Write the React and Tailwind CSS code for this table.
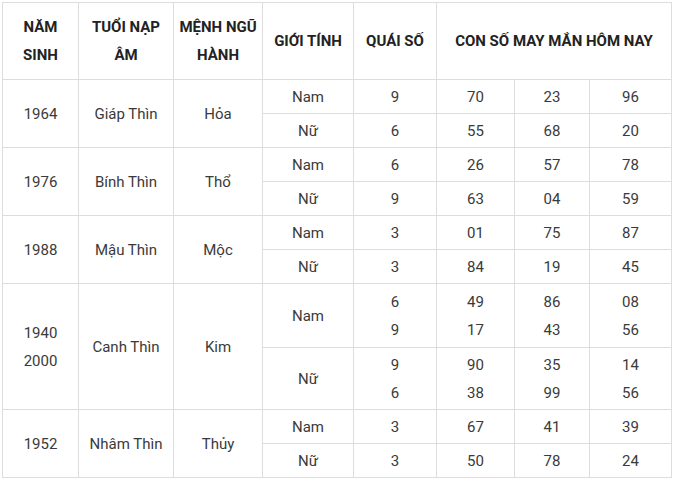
export default function App() {
  const groups = [
    { year: ['1964'], tuoi: 'Giáp Thìn', menh: 'Hỏa', rows: [
      { g: 'Nam', q: ['9'], n: [['70', '23', '96']], h: 'h-[34px]' },
      { g: 'Nữ', q: ['6'], n: [['55', '68', '20']], h: 'h-[34px]' },
    ] },
    { year: ['1976'], tuoi: 'Bính Thìn', menh: 'Thổ', rows: [
      { g: 'Nam', q: ['6'], n: [['26', '57', '78']], h: 'h-[34px]' },
      { g: 'Nữ', q: ['9'], n: [['63', '04', '59']], h: 'h-[34px]' },
    ] },
    { year: ['1988'], tuoi: 'Mậu Thìn', menh: 'Mộc', rows: [
      { g: 'Nam', q: ['3'], n: [['01', '75', '87']], h: 'h-[34px]' },
      { g: 'Nữ', q: ['3'], n: [['84', '19', '45']], h: 'h-[34px]' },
    ] },
    { year: ['1940', '2000'], tuoi: 'Canh Thìn', menh: 'Kim', rows: [
      { g: 'Nam', q: ['6', '9'], n: [['49', '86', '08'], ['17', '43', '56']], h: 'h-[64px]' },
      { g: 'Nữ', q: ['9', '6'], n: [['90', '35', '14'], ['38', '99', '56']], h: 'h-[62px]' },
    ] },
    { year: ['1952'], tuoi: 'Nhâm Thìn', menh: 'Thủy', rows: [
      { g: 'Nam', q: ['3'], n: [['67', '41', '39']], h: 'h-[34px]' },
      { g: 'Nữ', q: ['3'], n: [['50', '78', '24']], h: 'h-[34px]' },
    ] },
  ]

  const td = 'border border-[#dddddd] p-0 text-center align-middle'
  const lines = (arr) => arr.map((v, i) => <div key={i}>{v}</div>)

  return (
    <div className="w-[674px] h-[482px] bg-white pt-[2px] pl-[2px] font-['Roboto',sans-serif] text-[15px] leading-[28px] text-[#3a3a3a]">
      <table className="table-fixed border-collapse w-[669px]">
        <colgroup>
          <col className="w-[76px]" />
          <col className="w-[95px]" />
          <col className="w-[89px]" />
          <col className="w-[91px]" />
          <col className="w-[83px]" />
          <col className="w-[78px]" />
          <col className="w-[75px]" />
          <col className="w-[82px]" />
        </colgroup>
        <thead>
          <tr className="h-[77px] font-bold text-[#222222] uppercase">
            <th className={td}>Năm<br />Sinh</th>
            <th className={td}>Tuổi Nạp<br />Âm</th>
            <th className={td}>Mệnh Ngũ<br />Hành</th>
            <th className={td}>Giới Tính</th>
            <th className={td}>Quái Số</th>
            <th className={td} colSpan={3}>Con Số May Mắn Hôm Nay</th>
          </tr>
        </thead>
        <tbody>
          {groups.map((grp) =>
            grp.rows.map((r, ri) => (
              <tr key={grp.tuoi + r.g} className={r.h}>
                {ri === 0 && (
                  <>
                    <td className={td} rowSpan={2}>{lines(grp.year)}</td>
                    <td className={td} rowSpan={2}>{grp.tuoi}</td>
                    <td className={td} rowSpan={2}>{grp.menh}</td>
                  </>
                )}
                <td className={td}>{r.g}</td>
                <td className={td}>{lines(r.q)}</td>
                {[0, 1, 2].map((c) => (
                  <td key={c} className={td}>{lines(r.n.map((row) => row[c]))}</td>
                ))}
              </tr>
            ))
          )}
        </tbody>
      </table>
    </div>
  )
}
